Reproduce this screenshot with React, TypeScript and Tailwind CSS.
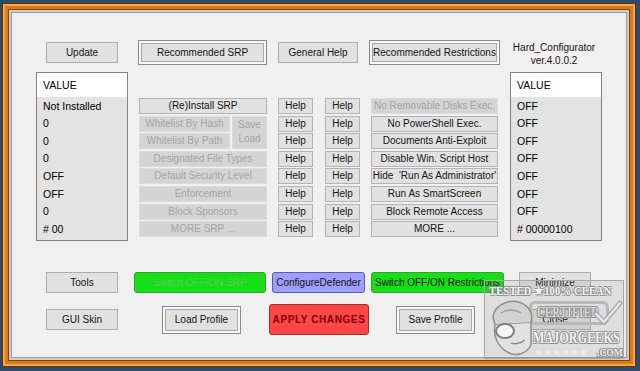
import React from "react";

const btn =
  "flex items-center justify-center bg-[#e1e1e1] border border-[#adadad] text-[10px] text-[#141414] leading-none whitespace-nowrap";
const raised =
  "flex items-center justify-center bg-[#e1e1e1] border border-[#8a8a8a] shadow-[inset_0_0_0_2px_#f8f8f8,inset_0_0_0_3px_#a9a9a9] text-[10px] text-[#141414] leading-none whitespace-nowrap";
const small =
  "flex items-center justify-center h-[16px] bg-[#e1e1e1] border border-[#b4b4b4] text-[10px] text-[#141414] leading-none whitespace-nowrap";
const dis =
  "flex items-center justify-center h-[16px] bg-[#d4d4d4] border border-[#dcdcdc] text-[10px] text-[#a4a4a4] leading-none whitespace-nowrap";

function ValueBox({ items }: { items: string[] }) {
  return (
    <div className="w-[92px] h-[169px] border border-[#828282] bg-[#e3e3e3] flex flex-col text-[10.5px] text-black leading-none">
      <div className="h-[24px] bg-white pl-[6px] flex items-center">VALUE</div>
      {items.map((t, i) => (
        <div key={i} className="h-[17.6px] pl-[6px] flex items-center whitespace-nowrap">
          {t}
        </div>
      ))}
    </div>
  );
}

function Watermark() {
  const outline =
    "[text-shadow:-1px_-1px_0_#8f8f8f,1px_-1px_0_#8f8f8f,-1px_1px_0_#8f8f8f,1px_1px_0_#8f8f8f]";
  return (
    <div className="absolute left-[484px] top-[280px] w-[140px] h-[79px] bg-[#7a7a7a]/15 border border-[#a8a8a8] overflow-hidden font-['Liberation_Serif',serif] font-bold text-[#f4f4f4]">
      <div
        className={`absolute left-[4px] top-[3px] w-[190px] origin-left scale-x-[0.8] text-[13px] leading-none tracking-[0.3px] ${outline}`}
      >
        TESTED ★100% CLEAN
      </div>
      <div className="absolute left-[44px] top-[20px] w-[80px] h-[24px] rounded-[6px] border-[3px] border-[#b8b8b8]" />
      <div
        className={`absolute left-[52px] top-[25px] w-[110px] origin-left scale-x-[0.72] text-[14px] leading-none tracking-[1px] text-[#dadada] ${outline}`}
      >
        CERTIFIED
      </div>
      <svg className="absolute left-[108px] top-[18px]" width="30" height="28" viewBox="0 0 30 28">
        <path d="M3 15 L11 23 L27 4" fill="none" stroke="#a4a4a4" strokeWidth="5" strokeLinecap="round" strokeLinejoin="round" />
        <path d="M3 15 L11 23 L27 4" fill="none" stroke="#e6e6e6" strokeWidth="2.5" strokeLinecap="round" strokeLinejoin="round" />
      </svg>
      <svg className="absolute left-[2px] top-[14px]" width="52" height="64" viewBox="0 0 52 64">
        <path d="M6 22 C8 8 26 2 38 10 C44 14 46 22 44 28 L8 30 Z" fill="#d2d2d2" stroke="#8f8f8f" strokeWidth="1.5" />
        <path d="M8 30 C6 40 10 52 22 58 C30 62 40 58 44 50 L44 28" fill="#e2e2e2" stroke="#8f8f8f" strokeWidth="1.5" />
        <ellipse cx="18" cy="36" rx="9" ry="7" fill="#f4f4f4" stroke="#7f7f7f" strokeWidth="2" />
        <path d="M24 48 C30 50 34 48 38 45" fill="none" stroke="#8f8f8f" strokeWidth="1.5" />
        <path d="M14 18 C20 14 28 14 34 18" fill="none" stroke="#9f9f9f" strokeWidth="1.5" />
      </svg>
      <div
        className={`absolute left-[48px] top-[49px] w-[130px] origin-left scale-x-[0.7] text-[17px] leading-[16px] tracking-[0.3px] ${outline}`}
      >
        MAJORGEEKS
      </div>
      <div className="absolute left-[50px] top-[67px] flex items-center gap-[8px] leading-[10px] text-[#ececec]">
        <span className="tracking-[2px] text-[8px]">★★★★★★</span>
        <span className={`text-[9.5px] ${outline}`}>.COM</span>
      </div>
    </div>
  );
}

export default function App() {
  const left = ["Not Installed", "0", "0", "0", "OFF", "OFF", "0", "# 00"];
  const right = ["OFF", "OFF", "OFF", "OFF", "OFF", "OFF", "OFF", "# 00000100"];
  const rightBtns = [
    "No PowerShell Exec.",
    "Documents Anti-Exploit",
    "Disable Win. Script Host",
    "Hide  'Run As Administrator'",
    "Run As SmartScreen",
    "Block Remote Access",
    "MORE ...",
  ];
  return (
    <div className="relative w-[640px] h-[371px] overflow-hidden bg-[#2d4a68] font-['Liberation_Sans',Arial,sans-serif] pt-[3px] pl-[2px]">
      <div className="w-[634px] h-[364px] border border-[#5a3510]">
        <div className="w-full h-full border-2 border-[#f4a64c]">
          <div className="w-full h-full border-[3px] border-[#e07812]">
            <div className="w-full h-full border border-[#7a4410]">
              <div className="w-full h-full border-2 border-[#cdcdcd]">
                <div className="w-full h-full border border-[#9a9a9a] bg-[#f0f0f0] pl-[24px] pt-[27px] flex flex-col">
                  {/* Row A */}
                  <div className="flex items-center h-[25px]">
                    <div className={`${btn} ml-[10px] w-[72px] h-[21px]`}>Update</div>
                    <div className={`${raised} ml-[20px] w-[129px] h-[25px]`}>Recommended SRP</div>
                    <div className={`${btn} ml-[11px] w-[80px] h-[21px]`}>General Help</div>
                    <div className={`${raised} ml-[11px] w-[131px] h-[25px]`}>Recommended Restrictions</div>
                    <div className="ml-[8px] w-[92px] self-start mt-[1px] flex flex-col items-center text-[10px] leading-[13px] text-[#141414]">
                      <span>Hard_Configurator</span>
                      <span>ver.4.0.0.2</span>
                    </div>
                  </div>

                  {/* Row B */}
                  <div className="mt-[7px] flex items-start">
                    <ValueBox items={left} />
                    <div className="ml-[11px] w-[128px] mt-[26px] flex flex-col gap-[1.6px]">
                      <div className={small}>(Re)Install SRP</div>
                      <div className="flex gap-[2px] h-[33.6px]">
                        <div className="w-[91px] flex flex-col gap-[1.6px]">
                          <div className={dis}>Whitelist By Hash</div>
                          <div className={dis}>Whitelist By Path</div>
                        </div>
                        <div className="flex-1 flex flex-col items-center justify-center bg-[#d4d4d4] border border-[#dcdcdc] text-[10px] leading-[14px] text-[#a4a4a4]">
                          <span>Save</span>
                          <span>Load</span>
                        </div>
                      </div>
                      <div className={dis}>Designated File Types</div>
                      <div className={dis}>Default Security Level</div>
                      <div className={dis}>Enforcement</div>
                      <div className={dis}>Block Sponsors</div>
                      <div className={dis}>MORE SRP ...</div>
                    </div>
                    <div className="ml-[11px] w-[35px] mt-[26px] flex flex-col gap-[1.6px]">
                      {Array.from({ length: 8 }).map((_, i) => (
                        <div key={i} className={small}>Help</div>
                      ))}
                    </div>
                    <div className="ml-[12px] w-[35px] mt-[26px] flex flex-col gap-[1.6px]">
                      {Array.from({ length: 8 }).map((_, i) => (
                        <div key={i} className={small}>Help</div>
                      ))}
                    </div>
                    <div className="ml-[11px] w-[127px] mt-[26px] flex flex-col gap-[1.6px]">
                      <div className={dis}>No Removable Disks Exec.</div>
                      {rightBtns.map((t) => (
                        <div key={t} className={`${small} whitespace-pre`}>{t}</div>
                      ))}
                    </div>
                    <div className="ml-[12px]">
                      <ValueBox items={right} />
                    </div>
                  </div>

                  {/* Row C */}
                  <div className="mt-[31px] flex items-center h-[21px]">
                    <div className={`${btn} ml-[10px] w-[72px] h-[21px]`}>Tools</div>
                    <div className="ml-[16px] w-[132px] h-[21px] flex items-center justify-center rounded-[3px] bg-[#14e014] border border-[#3c9a3c] text-[10px] leading-none text-[#62c962] whitespace-nowrap">
                      Switch OFF/ON SRP
                    </div>
                    <div className="ml-[6px] w-[93px] h-[21px] flex items-center justify-center rounded-[3px] bg-[#9e9eff] border border-[#5c5ca8] text-[10px] leading-none text-[#141414] whitespace-nowrap">
                      ConfigureDefender
                    </div>
                    <div className="ml-[6px] w-[133px] h-[21px] flex items-center justify-center rounded-[3px] bg-[#14e014] border border-[#3c9a3c] text-[10px] leading-none text-[#141414] whitespace-nowrap">
                      Switch OFF/ON Restrictions
                    </div>
                    <div className={`${btn} ml-[15px] w-[72px] h-[21px]`}>Minimize</div>
                  </div>

                  {/* Row D */}
                  <div className="mt-[11px] flex items-center h-[31px]">
                    <div className={`${btn} ml-[10px] w-[72px] h-[21px]`}>GUI Skin</div>
                    <div className={`${raised} ml-[44px] w-[79px] h-[28px]`}>Load Profile</div>
                    <div className="ml-[28px] w-[100px] h-[31px] flex items-center justify-center rounded-[3px] bg-[#ff4646] border border-[#9a3030] text-[10px] font-bold tracking-[0.6px] leading-none text-[#7a0000] whitespace-nowrap">
                      APPLY CHANGES
                    </div>
                    <div className={`${raised} ml-[27px] w-[79px] h-[28px]`}>Save Profile</div>
                    <div className={`${btn} ml-[44px] w-[72px] h-[21px]`}>Close</div>
                  </div>
                </div>
              </div>
            </div>
          </div>
        </div>
      </div>
      <Watermark />
    </div>
  );
}
